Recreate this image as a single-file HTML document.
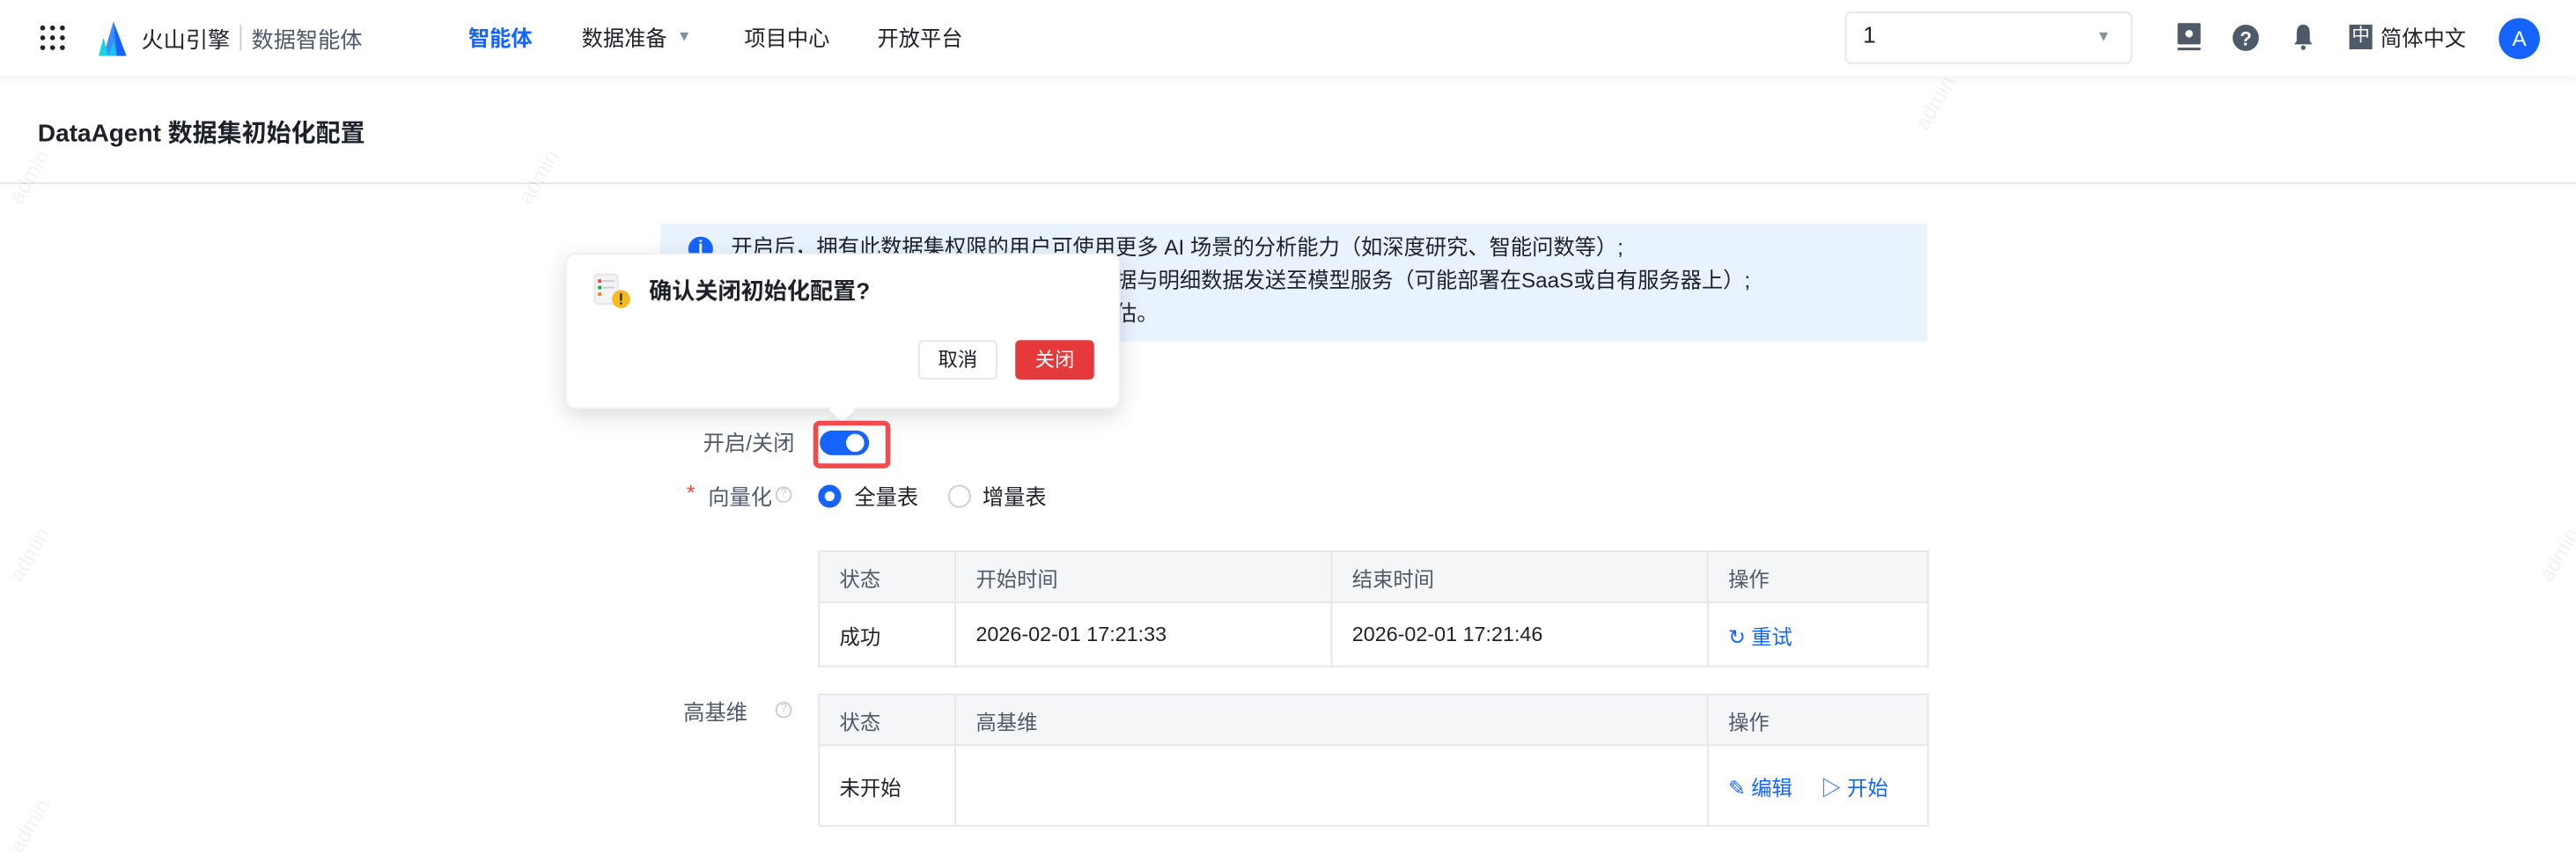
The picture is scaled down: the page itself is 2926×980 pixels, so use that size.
<!DOCTYPE html>
<html><head><meta charset="utf-8"><style>
*{margin:0;padding:0;box-sizing:border-box}
html,body{width:2926px;height:980px;overflow:hidden;background:#fff}
#w{position:absolute;left:0;top:0;width:1568px;height:525px;transform:scale(1.86607);transform-origin:0 0;font-family:"Liberation Sans","Noto Sans CJK SC",sans-serif;color:#1d2129;font-size:13px}
.a{position:absolute;white-space:nowrap}
.hdr{position:absolute;left:0;top:0;width:1568px;height:46px;background:#fff;box-shadow:0 2px 6px rgba(0,0,0,.06)}
.tb{position:absolute;border:1px solid #e5e6eb;border-collapse:collapse}
.tb td{border:1px solid #e5e6eb;padding:0 12px;font-size:12.5px}
.tb tr.h td{background:#f5f6f8;color:#4e5969;height:31px}
.blue{color:#1664ff}
.wm{position:absolute;color:rgba(0,0,0,.05);font-size:13px;transform:rotate(-60deg)}
</style></head><body><div id="w">
<div class="hdr">
 <svg class="a" style="left:24px;top:15px" width="16" height="16" viewBox="0 0 16 16" fill="#1d2129"><circle cx="2" cy="2" r="1.5"/><circle cx="8" cy="2" r="1.5"/><circle cx="14" cy="2" r="1.5"/><circle cx="2" cy="8" r="1.5"/><circle cx="8" cy="8" r="1.5"/><circle cx="14" cy="8" r="1.5"/><circle cx="2" cy="14" r="1.5"/><circle cx="8" cy="14" r="1.5"/><circle cx="14" cy="14" r="1.5"/></svg>
 <svg class="a" style="left:60px;top:13px" width="17" height="21" viewBox="0 0 17 21"><path d="M9 0 L17 21 H11 Z" fill="#1664ff"/><path d="M9 0 L11 21 H3 Z" fill="#3a8dff"/><path d="M3 10 L6 21 H0 Z" fill="#19d1e6"/><path d="M6 21 L9 12 L11 21Z" fill="#16c6f0"/></svg>
 <div class="a" style="left:86px;top:13px;font-size:13.5px">火山引擎</div>
 <div class="a" style="left:146px;top:15px;width:1px;height:16px;background:#c9cdd4"></div>
 <div class="a" style="left:153px;top:13px;font-size:13.5px;color:#4e5969">数据智能体</div>
 <div class="a" style="left:285px;top:13px;color:#1664ff;font-weight:bold">智能体</div>
 <div class="a" style="left:354px;top:13px;color:#1d2129">数据准备</div>
 <div class="a" style="left:412px;top:13px;color:#86909c;font-size:9px;line-height:18px">▼</div>
 <div class="a" style="left:453px;top:13px">项目中心</div>
 <div class="a" style="left:534px;top:13px">开放平台</div>
 <div class="a" style="left:1123px;top:7px;width:175px;height:32px;border:1px solid #e5e6eb;border-radius:4px"></div>
 <div class="a" style="left:1134px;top:13px;font-size:14px">1</div>
 <div class="a" style="left:1276px;top:13px;color:#86909c;font-size:9px;line-height:18px">▼</div>
 <svg class="a" style="left:1325px;top:14px" width="15" height="17" viewBox="0 0 15 17"><rect x="0.5" y="0" width="14" height="13" rx="1" fill="#4e5969"/><circle cx="7.5" cy="6.5" r="2.3" fill="#fff"/><rect x="0.5" y="15" width="14" height="1.6" fill="#4e5969"/></svg>
 <svg class="a" style="left:1359px;top:15px" width="16" height="16" viewBox="0 0 16 16"><circle cx="8" cy="8" r="8" fill="#4e5969"/><text x="8" y="12.5" text-anchor="middle" fill="#fff" font-size="12" font-weight="bold" font-family="Liberation Sans">?</text></svg>
 <svg class="a" style="left:1396px;top:14px" width="12" height="17" viewBox="0 0 12 17"><path d="M6 1 C2.5 1 2 4 2 7 V11 L0.5 13 H11.5 L10 11 V7 C10 4 9.5 1 6 1Z" fill="#4e5969"/><circle cx="6" cy="15" r="1.4" fill="#4e5969"/></svg>
 <div class="a" style="left:1430px;top:15px;width:14px;height:15px;background:#4e5969;color:#fff;font-size:11px;text-align:center;line-height:15px">中</div>
 <div class="a" style="left:1449px;top:13px">简体中文</div>
 <div class="a" style="left:1521px;top:11px;width:25px;height:25px;border-radius:50%;background:#1664ff;color:#fff;text-align:center;line-height:25px;font-size:13px">A</div>
</div>
<div class="a" style="left:23px;top:70px;font-size:15px;font-weight:bold">DataAgent 数据集初始化配置</div>
<div class="a" style="left:0;top:111px;width:1568px;height:1px;background:#e5e6eb"></div>

<div class="a" style="left:402px;top:136px;width:771px;height:72px;background:#e8f3ff"></div>
<div class="a" style="left:419px;top:144px;width:15px;height:15px;border-radius:50%;background:#1664ff;color:#fff;font-size:11px;text-align:center;line-height:15px;font-weight:bold">i</div>
<div class="a" style="left:445px;top:141px;font-size:13px;line-height:20px">开启后，拥有此数据集权限的用户可使用更多 AI 场景的分析能力（如深度研究、智能问数等）;<br>开启后，系统会将数据集的相关字段元数据与明细数据发送至模型服务（可能部署在SaaS或自有服务器上）;<br>请根据企业的数据安全与合规要求谨慎评估。</div>

<div class="a" style="left:344px;top:154px;width:338px;height:95px;background:#fff;border-radius:6px;box-shadow:0 4px 14px rgba(0,0,0,.14);border:1px solid #eef0f3"></div>
<div class="a" style="left:507px;top:244px;width:11px;height:11px;background:#fff;transform:rotate(45deg);box-shadow:3px 3px 5px rgba(0,0,0,.06)"></div>
<svg class="a" style="left:361px;top:166px" width="24" height="24" viewBox="0 0 24 24"><rect x="1" y="1" width="14" height="18" rx="2" fill="#f2f3f5" stroke="#e5e6eb"/><rect x="3" y="4" width="2" height="2" fill="#f53f3f"/><rect x="3" y="8" width="2" height="2" fill="#00b42a"/><rect x="3" y="12" width="2" height="2" fill="#ff7d00"/><rect x="6" y="4.5" width="7" height="1" fill="#c9cdd4"/><rect x="6" y="8.5" width="7" height="1" fill="#c9cdd4"/><circle cx="17" cy="16" r="5.5" fill="#f7ba1e"/><rect x="16.4" y="12.5" width="1.2" height="4.5" fill="#1d2129"/><rect x="16.4" y="18" width="1.2" height="1.2" fill="#1d2129"/></svg>
<div class="a" style="left:395px;top:167px;font-size:14px;font-weight:bold">确认关闭初始化配置?</div>
<div class="a" style="left:559px;top:207px;width:48px;height:24px;border:1px solid #e5e6eb;border-radius:3px;text-align:center;line-height:22px;font-size:12px">取消</div>
<div class="a" style="left:618px;top:207px;width:48px;height:24px;background:#e5393b;border-radius:3px;color:#fff;text-align:center;line-height:24px;font-size:12px">关闭</div>

<div class="a" style="left:428px;top:259px;color:#4e5969">开启/关闭</div>
<div class="a" style="left:495px;top:256px;width:47px;height:29px;border:3px solid #f24b4b;border-radius:4px"></div>
<div class="a" style="left:499px;top:262px;width:30px;height:15px;border-radius:8px;background:#1664ff"></div>
<div class="a" style="left:515px;top:264px;width:11px;height:11px;border-radius:50%;background:#fff"></div>

<div class="a" style="left:418px;top:292px;color:#f53f3f">*</div>
<div class="a" style="left:431px;top:292px;color:#4e5969">向量化</div>
<div class="a" style="left:472px;top:296px;width:10px;height:10px;border:1px solid #c9cdd4;border-radius:50%;font-size:7px;color:#c9cdd4;text-align:center;line-height:8px">?</div>
<div class="a" style="left:498px;top:295px;width:14px;height:14px;border-radius:50%;border:4px solid #1664ff"></div>
<div class="a" style="left:520px;top:292px">全量表</div>
<div class="a" style="left:577px;top:295px;width:14px;height:14px;border-radius:50%;border:1px solid #c9cdd4"></div>
<div class="a" style="left:598px;top:292px">增量表</div>

<table class="tb" style="left:498px;top:335px;width:676px">
<tr class="h"><td style="width:83px">状态</td><td style="width:229px">开始时间</td><td style="width:229px">结束时间</td><td>操作</td></tr>
<tr style="height:39px"><td>成功</td><td>2026-02-01 17:21:33</td><td>2026-02-01 17:21:46</td><td class="blue">↻ 重试</td></tr>
</table>
<div class="a" style="left:416px;top:423px;color:#4e5969">高基维</div>
<div class="a" style="left:472px;top:427px;width:10px;height:10px;border:1px solid #c9cdd4;border-radius:50%;font-size:7px;color:#c9cdd4;text-align:center;line-height:8px">?</div>
<table class="tb" style="left:498px;top:422px;width:676px">
<tr class="h"><td style="width:83px">状态</td><td style="width:458px">高基维</td><td>操作</td></tr>
<tr style="height:49px"><td>未开始</td><td></td><td class="blue">✎ 编辑 &nbsp;&nbsp;&nbsp; ▷ 开始</td></tr>
</table>
<div class="wm" style="left:0;top:100px">admin</div>
<div class="wm" style="left:310px;top:100px">admin</div>
<div class="wm" style="left:1160px;top:55px">admin</div>
<div class="wm" style="left:0;top:330px">admin</div>
<div class="wm" style="left:1540px;top:330px">admin</div>
<div class="wm" style="left:0;top:495px">admin</div>
</div></body></html>
